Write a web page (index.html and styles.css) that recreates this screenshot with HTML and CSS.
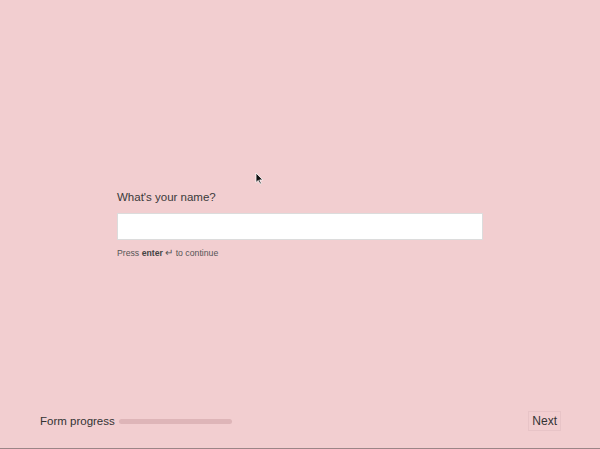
FILE: index.html
```html
<!DOCTYPE html>
<html lang="en">
<head>
<meta charset="utf-8">
<title>Form</title>
<link rel="stylesheet" href="styles.css">
</head>
<body>
<div class="page">
  <main class="stage">
    <div class="question">
      <label class="q-label" for="name">What's your name?</label>
      <input class="q-input" id="name" type="text">
      <p class="q-hint">Press <b>enter</b> <span class="enter">&#8629;</span> to continue</p>
    </div>
  </main>
  <footer class="bar">
    <div class="progress">
      <span class="progress-label">Form progress</span>
      <span class="track"><span class="fill" style="width:0%"></span></span>
    </div>
    <button class="next" type="button">Next</button>
  </footer>
  <svg class="cursor" width="9" height="13" viewBox="0 0 9 13"><path d="M1 1 L1 10.5 L3.3 8.4 L5 12 L6.4 11.4 L4.7 7.9 L7.8 7.9 Z" fill="#111" stroke="#fff" stroke-width="0.8"/></svg>
</div>
</body>
</html>
```
FILE: styles.css
```css
* { box-sizing: border-box; }
html, body { margin: 0; padding: 0; }
body {
  background: #f2ced0;
  font-family: "Liberation Sans", Arial, sans-serif;
  color: #333;
}
.page {
  position: relative;
  height: 449px;
  border-bottom: 1px solid #9c8587;
  display: grid;
  grid-template-areas: "a";
}
.stage {
  grid-area: a;
  display: flex;
  align-items: center;
  justify-content: center;
}
.question {
  width: 366px;
}
.q-label {
  display: block;
  font-size: 11.5px;
  line-height: 14px;
  color: #3a3a3a;
  margin-bottom: 9px;
}
.q-input {
  display: block;
  width: 366px;
  height: 27px;
  border: 1px solid #dcdcdc;
  background: #fff;
  margin: 0;
  outline: none;
}
.q-hint {
  margin: 7px 0 0;
  font-size: 8.7px;
  color: #555;
}
.q-hint b { color: #444; }
.enter { font-size: 9.5px; }
.bar {
  grid-area: a;
  align-self: end;
  display: flex;
  align-items: center;
  justify-content: space-between;
  padding: 0 39px 17px 40px;
}
.progress {
  display: flex;
  align-items: center;
  gap: 4px;
}
.progress-label {
  font-size: 11.5px;
  color: #333;
}
.track {
  display: block;
  width: 113px;
  height: 5px;
  border-radius: 3px;
  background: #deb5b8;
  overflow: hidden;
}
.fill { display: block; height: 100%; background: #c99; }
.next {
  font-family: inherit;
  font-size: 12px;
  color: #333;
  background: transparent;
  border: 1px solid #e8c4c7;
  padding: 2px 3px;
  height: 20px;
  line-height: 14px;
}
.cursor {
  position: absolute;
  left: 255px;
  top: 172px;
}
```
